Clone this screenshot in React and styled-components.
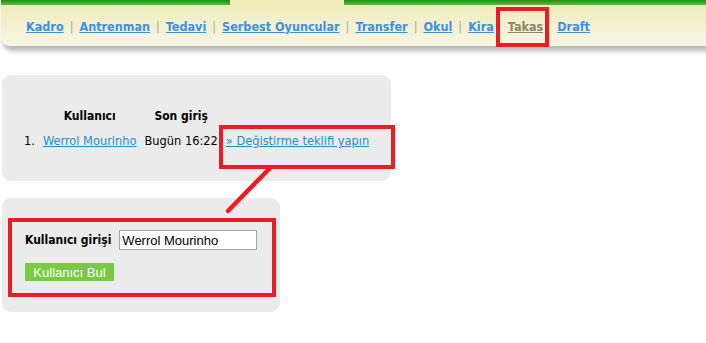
import React from 'react'
import styled, { createGlobalStyle } from 'styled-components'

const Global = createGlobalStyle`
  body {
    margin: 0;
    background: #fff;
    font-family: "DejaVu Sans", Verdana, sans-serif;
  }
`

const Page = styled.div`
  position: relative;
  width: 706px;
  height: 343px;
  overflow: hidden;
`

const NavPanel = styled.div`
  margin-left: 1px;
  width: 720px;
  height: 46px;
  background: linear-gradient(#f0eab8, #f7f6e3);
  border-bottom-left-radius: 9px;
  box-shadow: 2px 5px 5px rgba(0, 0, 0, 0.28);
  display: flex;
  flex-direction: column;
`

const TopBar = styled.div`
  display: flex;
  height: 5px;
`

const Green = styled.div`
  height: 5px;
  width: ${p => (p.$w ? p.$w + 'px' : 'auto')};
  flex: ${p => (p.$w ? 'none' : 1)};
  background: linear-gradient(#1f8f12, #5dbb40);
`

const Notch = styled.div`
  width: 114px;
`

const Links = styled.nav`
  display: flex;
  align-items: center;
  padding: 1px 0 0 25px;
  height: 40px;
  font-size: 12.5px;
  font-weight: bold;
  font-family: "DejaVu Sans Condensed", "DejaVu Sans", sans-serif;
`

const NavLink = styled.a`
  color: ${p => (p.$active ? '#8a8468' : '#3b8fe6')};
  text-decoration: underline;
  cursor: pointer;
`

const Sep = styled.span`
  color: #b0aa98;
  font-weight: normal;
  margin: 0 6px;
`

const Gap = styled.span`
  width: 14px;
`

const Box = styled.div`
  background: #ebebeb;
  border-radius: 9px;
  margin-left: 2px;
  width: ${p => p.$w}px;
  height: ${p => p.$h}px;
  margin-top: ${p => p.$top}px;
  padding: ${p => p.$pad};
  box-sizing: border-box;
`

const Table = styled.table`
  border-collapse: collapse;
  font-family: "DejaVu Sans Condensed", "DejaVu Sans", sans-serif;
  font-size: 12.7px;
  color: #000;
  th {
    font-weight: bold;
    font-size: 12px;
    text-align: center;
    padding: 0 4px 10px;
  }
  td {
    padding: 0 4px;
    white-space: nowrap;
  }
`

const UserLink = styled.a`
  color: #1d8ec9;
  text-decoration: underline;
  cursor: pointer;
`

const Form = styled.div`
  font-family: "DejaVu Sans Condensed", "DejaVu Sans", sans-serif;
`

const FieldRow = styled.div`
  display: flex;
  align-items: center;
  gap: 8px;
`

const Label = styled.label`
  font-size: 12px;
  font-weight: bold;
`

const Input = styled.input`
  width: 138px;
  height: 20px;
  box-sizing: border-box;
  border: 1px solid #a4a4a4;
  padding: 0 2px;
  font-family: "Liberation Sans", Arial, sans-serif;
  font-size: 13px;
  color: #000;
  outline: none;
`

const Button = styled.button`
  display: block;
  margin-top: 13px;
  width: 89px;
  height: 18px;
  border: none;
  background: #7ac943;
  color: #fff;
  font-family: "Liberation Sans", Arial, sans-serif;
  font-size: 13px;
  padding: 0;
  cursor: pointer;
`

const Mark = styled.div`
  position: absolute;
  left: ${p => p.$x}px;
  top: ${p => p.$y}px;
  width: ${p => p.$w}px;
  height: ${p => p.$h}px;
  border: 4px solid #ed1c24;
  box-sizing: border-box;
  pointer-events: none;
`

const Line = styled.svg`
  position: absolute;
  left: 222px;
  top: 164px;
  pointer-events: none;
`

const items = ['Kadro', 'Antrenman', 'Tedavi', 'Serbest Oyuncular', 'Transfer', 'Okul', 'Kira']

export default function App() {
  return (
    <Page>
      <Global />
      <NavPanel>
        <TopBar>
          <Green $w={229} />
          <Notch />
          <Green />
        </TopBar>
        <Links>
          {items.map((t, i) => (
            <React.Fragment key={t}>
              {i > 0 && <Sep>|</Sep>}
              <NavLink>{t}</NavLink>
            </React.Fragment>
          ))}
          <Gap />
          <NavLink $active>Takas</NavLink>
          <Gap />
          <NavLink>Draft</NavLink>
        </Links>
      </NavPanel>

      <Box $w={389} $h={106} $top={29} $pad="34px 0 0 18px">
        <Table>
          <thead>
            <tr>
              <th></th>
              <th>Kullanıcı</th>
              <th>Son giriş</th>
              <th></th>
            </tr>
          </thead>
          <tbody>
            <tr>
              <td>1.</td>
              <td><UserLink>Werrol Mourinho</UserLink></td>
              <td>Bugün 16:22</td>
              <td><UserLink>» Değistirme teklifi yapın</UserLink></td>
            </tr>
          </tbody>
        </Table>
      </Box>

      <Box $w={278} $h={114} $top={17} $pad="32px 0 0 23px">
        <Form>
          <FieldRow>
            <Label>Kullanıcı girişi</Label>
            <Input defaultValue="Werrol Mourinho" />
          </FieldRow>
          <Button>Kullanıcı Bul</Button>
        </Form>
      </Box>

      <Mark $x={496} $y={7} $w={53} $h={40} />
      <Mark $x={219} $y={125} $w={176} $h={44} />
      <Mark $x={8} $y={218} $w={268} $h={79} />
      <Line width="56" height="54">
        <line x1="48" y1="4" x2="6" y2="47" stroke="#ed1c24" strokeWidth="4.5" strokeLinecap="round" />
      </Line>
    </Page>
  )
}
